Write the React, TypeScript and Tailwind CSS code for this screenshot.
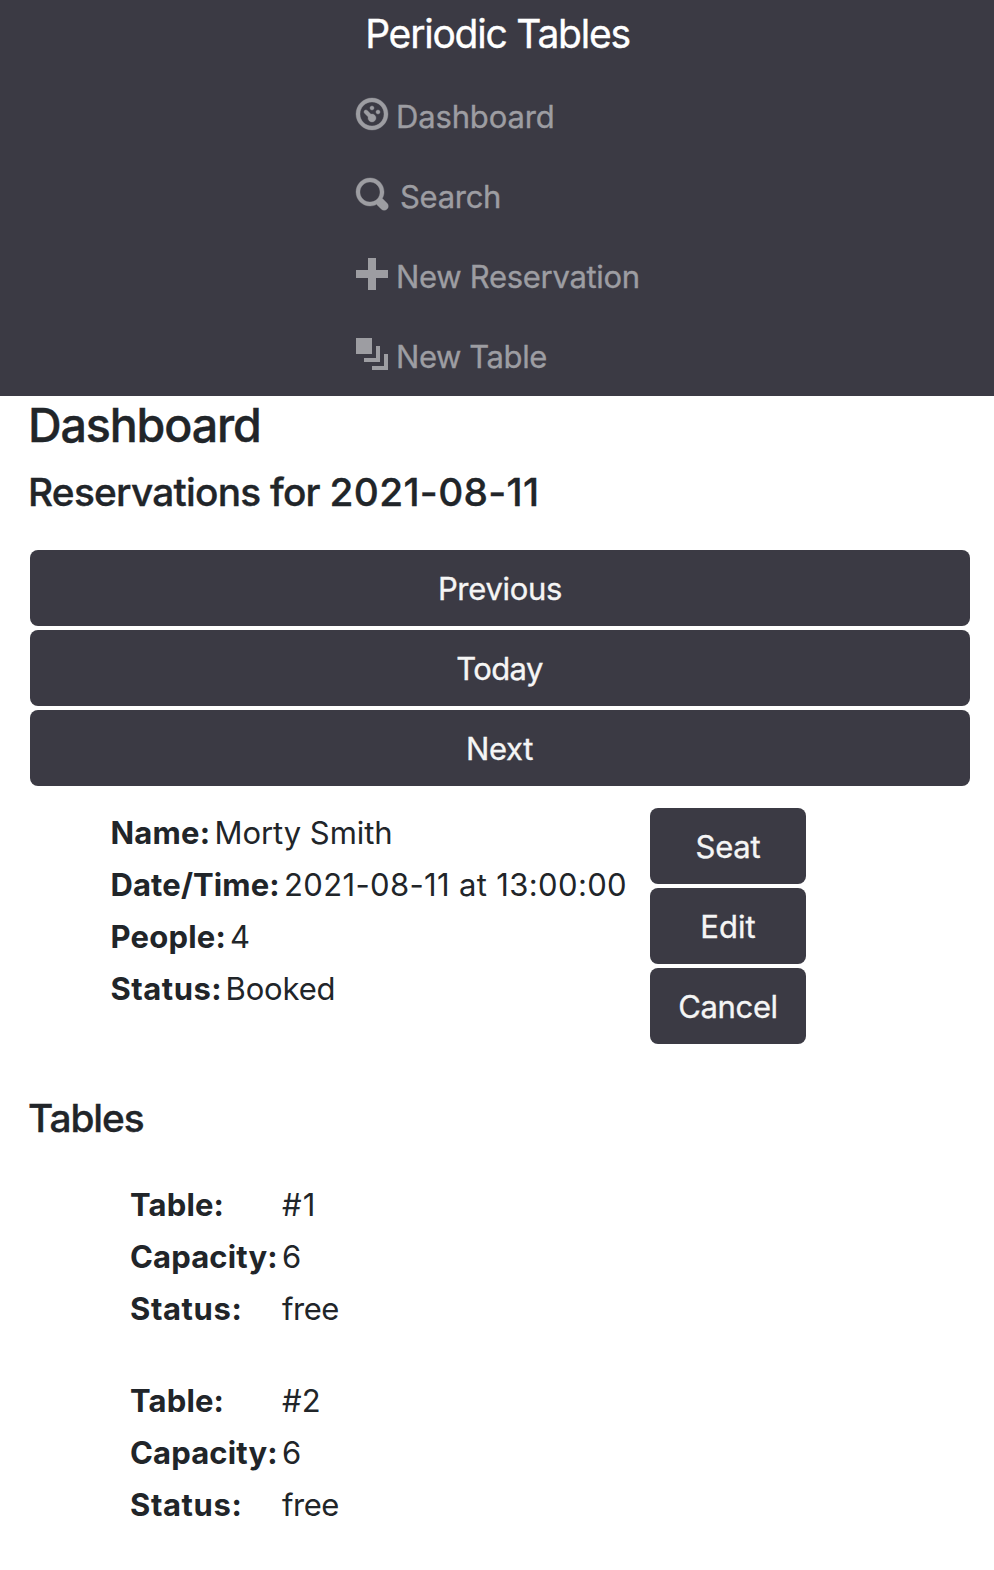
import React from "react";

const ICONS = {
  dashboard:
    "M4 0c-2.2 0-4 1.8-4 4s1.8 4 4 4 4-1.8 4-4-1.8-4-4-4zm0 1c1.66 0 3 1.34 3 3s-1.34 3-3 3-3-1.34-3-3 1.34-3 3-3zm0 1c-.28 0-.5.22-.5.5s.22.5.5.5.5-.22.5-.5-.22-.5-.5-.5zm-1.66 1a.5.5 0 0 0-.19.84l.91.91c-.02.08-.06.16-.06.25 0 .55.45 1 1 1s1-.45 1-1-.45-1-1-1c-.09 0-.17.04-.25.06l-.91-.91a.5.5 0 0 0-.44-.16.5.5 0 0 0-.06 0zm3.16 0c-.28 0-.5.22-.5.5s.22.5.5.5.5-.22.5-.5-.22-.5-.5-.5z",
  search:
    "M3.5 0c-1.93 0-3.5 1.57-3.5 3.5s1.57 3.5 3.5 3.5c.59 0 1.17-.14 1.66-.41a1 1 0 0 0 .13.13l1 1a1.02 1.02 0 1 0 1.44-1.44l-1-1a1 1 0 0 0-.16-.13c.27-.49.44-1.06.44-1.66 0-1.93-1.55-3.5-3.5-3.5zm0 1c1.39 0 2.5 1.11 2.5 2.5 0 .66-.24 1.27-.66 1.72-.01.01-.02.02-.03.03a1 1 0 0 0-.13.13c-.44.4-1.04.63-1.69.63-1.39 0-2.5-1.11-2.5-2.5s1.11-2.5 2.5-2.5z",
  plus: "M3 0v3h-3v2h3v3h2v-3h3v-2h-3v-3h-2z",
  layers: "M0 0v4h4v-4h-4zm5 2v3h-3v1h4v-4h-1zm2 2v3h-3v1h4v-4h-1z",
};

function NavItem({ icon, label, text }: { icon: keyof typeof ICONS; label: string; text: string }) {
  const round = icon === "dashboard" || icon === "search";
  return (
    <a className="flex h-20 items-start">
      <svg viewBox="0 0 8 8" className="mt-[9px] size-8 shrink-0 overflow-visible fill-current">
        <path d={ICONS[icon]} stroke={round ? "currentColor" : "none"} strokeWidth={0.09} />
      </svg>
      <span className={`whitespace-nowrap leading-[56px] [-webkit-text-stroke:0.35px] ${text}`}>{label}</span>
    </a>
  );
}

function Button({ label, text }: { label: string; text: string }) {
  return (
    <button className={`h-19 w-full rounded-lg bg-[#3b3a44] pt-px text-center text-[31px] text-[#f5f5f5] [-webkit-text-stroke:0.35px] ${text}`}>
      {label}
    </button>
  );
}

function Field({ label, value, labelText, valueText }: { label: string; value: string; labelText: string; valueText: string }) {
  return (
    <div className="flex h-13 whitespace-nowrap">
      <dt className={`font-bold ${labelText}`}>{label}</dt>
      <dd className={valueText}>{value}</dd>
    </div>
  );
}

function TableCard({ name, nameText }: { name: string; nameText: string }) {
  return (
    <dl className="grid grid-cols-[152px_auto] justify-start">
      <dt className="font-bold tracking-[0.15px]">Table:</dt>
      <dd className={nameText}>{name}</dd>
      <dt className="font-bold tracking-[0.15px]">Capacity:</dt>
      <dd>6</dd>
      <dt className="font-bold tracking-[0.6px]">Status:</dt>
      <dd className="tracking-[-0.5px]">free</dd>
    </dl>
  );
}

export default function App() {
  return (
    <div className="h-[1570px] overflow-hidden bg-white font-['Inter',sans-serif] text-[31px] leading-[52px] text-[#212529]">
      <header className="flex h-[396px] flex-col items-center overflow-hidden bg-[#3b3a44]">
        <div className="h-[68px] shrink-0 whitespace-nowrap pl-px text-[39px] leading-[68px] tracking-[-1.22px] text-white [-webkit-text-stroke:0.35px]">
          Periodic Tables
        </div>
        <nav className="mt-[21px] flex w-[282px] shrink-0 flex-col text-[#9d9da2]">
          <NavItem icon="dashboard" label="Dashboard" text="ml-2 tracking-[-0.15px]" />
          <NavItem icon="search" label="Search" text="ml-3 tracking-[-0.3px]" />
          <NavItem icon="plus" label="New Reservation" text="ml-2 tracking-[-0.3px]" />
          <NavItem icon="layers" label="New Table" text="ml-2 tracking-[-0.42px]" />
        </nav>
      </header>

      <main className="pl-7">
        <h1 className="pt-[1px] text-[46.6px] font-medium leading-[56px] tracking-[-1.15px] [-webkit-text-stroke:0.4px]">Dashboard</h1>
        <h2 className="mt-[15px] text-[38.8px] font-medium leading-[48px] tracking-[-0.75px] [-webkit-text-stroke:0.35px]">
          Reservations for <span className="tracking-[0.35px]">2021-08-11</span>
        </h2>

        <div className="ml-0.5 mt-[34px] flex w-[940px] flex-col gap-1">
          <Button label="Previous" text="tracking-[-0.3px]" />
          <Button label="Today" text="pr-px tracking-[-0.6px]" />
          <Button label="Next" text="pr-px tracking-[-0.3px]" />
        </div>

        <section className="mt-[21px] flex pl-[82px]">
          <dl className="w-[540px]">
            <Field label="Name:" value="Morty Smith" labelText="w-[103.5px] pl-[0.5px] tracking-[0.2px]" valueText="ml-[1px] tracking-[-0.05px]" />
            <Field label="Date/Time:" value="2021-08-11 at 13:00:00" labelText="w-[173px] pl-[0.5px] tracking-[0.12px]" valueText="ml-[1px] tracking-[0.35px]" />
            <Field label="People:" value="4" labelText="w-[119px] pl-[0.5px] tracking-[0.2px]" valueText="ml-[1px]" />
            <Field label="Status:" value="Booked" labelText="w-[114.5px] pl-[0.5px] tracking-[0.5px]" valueText="ml-[1px] tracking-[-0.15px]" />
          </dl>
          <div className="mt-px flex w-[156px] flex-col gap-1">
            <Button label="Seat" text="tracking-[-0.2px]" />
            <Button label="Edit" text="tracking-[0px]" />
            <Button label="Cancel" text="tracking-[-0.35px]" />
          </div>
        </section>

        <h2 className="mt-[50px] text-[38.8px] font-medium leading-[48px] tracking-[-1.05px] [-webkit-text-stroke:0.35px]">Tables</h2>
        <div className="mt-[37px] flex flex-col gap-10 pl-[102px]">
          <TableCard name="#1" nameText="tracking-[1px]" />
          <TableCard name="#2" nameText="tracking-[0px]" />
        </div>
      </main>
    </div>
  );
}
